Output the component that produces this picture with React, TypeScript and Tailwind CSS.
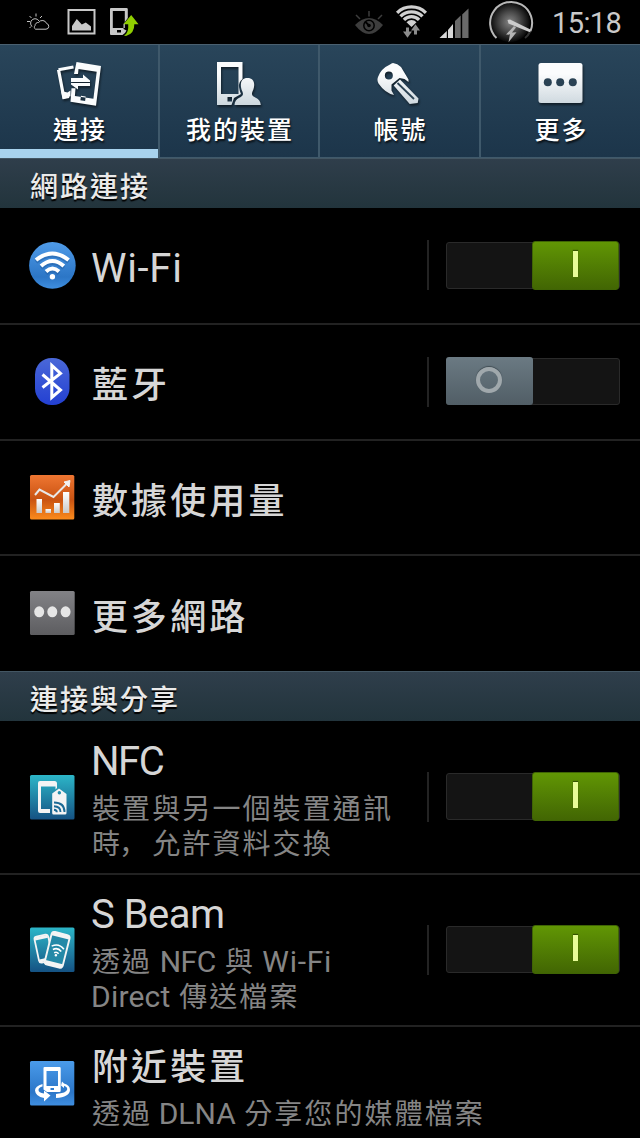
import React from 'react';

type TextSize = 'tab' | 'section' | 'title' | 'summary';

interface MixedTextProps {
  text: string;
  size: TextSize;
}

// Han runs are set a little smaller than the Latin ones and spaced wider
const hanStyles: Record<TextSize, string> = {
  tab: 'text-[25px] tracking-[2px] font-medium',
  section: 'text-[28px] tracking-[2px] font-medium',
  title: 'text-[36px] tracking-[3.1px] font-medium',
  summary: 'text-[28px] tracking-[2.1px] font-normal',
};

const latinTracking = (run: string) => {
  if (run.includes('Wi-Fi')) return 'tracking-[0.7px]';
  if (run === 'NFC') return 'tracking-[-1.5px]';
  if (run.includes('NFC')) return 'tracking-[-0.5px] [word-spacing:1.5px]';
  if (run.includes('Beam')) return 'tracking-[-0.5px]';
  if (run.includes('Direct')) return 'tracking-[0.2px]';
  return 'tracking-normal';
};

const MixedText: React.FC<MixedTextProps> = ({ text, size }) => {
  const runs = text.match(/[\x00-\x7f]+|，|[^\x00-\x7f，]+/g) || [];
  return (
    <>
      {runs.map((run, i) => {
        if (run.charCodeAt(0) < 128) {
          return <span key={i} className={latinTracking(run)}>{run}</span>;
        }
        const family = run === '，'
          ? "-ml-[2px] mr-[2px] font-['Noto_Sans_CJK_SC',sans-serif]"
          : "pl-px -mr-px font-['Noto_Sans_CJK_TC',sans-serif]";
        return (
          <span key={i} className={`inline-block leading-none ${family} ${hanStyles[size]}`}>{run}</span>
        );
      })}
    </>
  );
};

const StatusBar: React.FC = () => (
  <div className="flex h-11 shrink-0 items-start bg-black">
    {/* Notifications */}
    <svg className="ml-[25px]" width="26" height="44" viewBox="25 0 26 44" fill="none" stroke="#c4c4c4" strokeWidth="1">
      <path d="M32 26.5a4.5 4.5 0 1 1 7-5.5M36 13.5v3M29.5 16l2 2M42 16l-2 2M27 21.5h3M29.5 28l1.500-1.500" />
      <path d="M35.500 29.200h10.500a2.900 2.900 0 0 0 .6-5.700a4.500 4.500 0 0 0-8-1a3.200 3.200 0 0 0-3.600 3.200a2.200 2.200 0 0 0 .5 3.500z" />
    </svg>
    <svg className="ml-[16px]" width="30" height="44" viewBox="67 0 30 44">
      <rect x="68.500" y="10" width="26" height="23.500" fill="none" stroke="#c8c8c8" strokeWidth="2" />
      <path d="M72 30.500V26l4.800-7l5 5.500l4-2l5.200 4v4z" fill="#c8c8c8" />
    </svg>
    <svg className="ml-[12px]" width="32" height="44" viewBox="109 0 32 44">
      <path fillRule="evenodd" d="M111 8h15.500q1.300 0 1.300 1.300V18l-4.300 6v5l3 1.500q-1.500 3.500-4 4.500H111q-1 0-1-1V9q0-1 1-1zM112.800 11v17h12V11zM117 30v2.500h4V30z" fill="#c8c8c8" />
      <path d="M124 35.500q5-2.500 4.200-11.300h-4.700l7.700-9.200l7.300 9.200h-4.200q.3 9.300-8.300 11.800z" fill="#8fce00" />
    </svg>

    {/* System indicators */}
    <svg className="ml-[213px]" width="32" height="44" viewBox="354 0 32 44">
      <path d="M355 25q14-14 28 0q-14 18-28 0z" fill="#3d3d3d" />
      <circle cx="369" cy="25.500" r="5.200" fill="none" stroke="#000" strokeWidth="1.500" />
      <circle cx="369" cy="25.500" r="1.800" fill="#000" />
      <path d="M365 21.500l4 4" stroke="#000" strokeWidth="1.800" />
      <path d="M356 15l4 4M369 11v5.500M382 15l-4 4" stroke="#3d3d3d" strokeWidth="1.500" />
    </svg>
    <svg className="ml-[8px]" width="36" height="44" viewBox="394 0 36 44" fill="none">
      <path d="M397.100 12.800a20.500 20.500 0 0 1 28.800 0M400.500 16.400a15.500 15.500 0 0 1 22 0M403.900 19.800a10.700 10.700 0 0 1 15.200 0" stroke="#d0d0d0" strokeWidth="3.300" />
      <path d="M406.500 22.200a7 7 0 0 1 10 0l-5 4.800z" fill="#d0d0d0" />
      <path d="M407.500 27.500v6M415.500 34.500v-7" stroke="#8c8c8c" strokeWidth="3" />
      <path d="M403 31.500h9l-4.500 6.300zM411 30.500h9l-4.500-6.300z" fill="#8c8c8c" />
    </svg>
    <svg className="ml-[8px]" width="34" height="44" viewBox="438 0 34 44">
      <path d="M439.500 38l7.300-7v7zM448 38v-8l5-6v14z" fill="#d8d8d8" />
      <path d="M455 38V21l5.700-5.500v22.500zM462.200 38V14.500l6.300-6v29.500z" fill="#6a6a6a" />
    </svg>
    <svg className="ml-[14px]" width="48" height="44" viewBox="487 0 48 44" fill="none">
      <defs>
        <radialGradient id="gauge">
          <stop offset="0" stopColor="#858585" />
          <stop offset="0.5" stopColor="#4a4a4a" />
          <stop offset="1" stopColor="#080808" />
        </radialGradient>
      </defs>
      <circle cx="511" cy="22" r="20" fill="url(#gauge)" />
      <path d="M497.500 38A21 21 0 1 1 531.500 31" stroke="#b8b8b8" strokeWidth="2" />
      <path d="M526 38q3-2 4.500-5.500" stroke="#333" strokeWidth="2" />
      <path d="M508.500 20l2.500-.5l20.500 10v3l-22-9z" fill="#ccc" />
      <path d="M515 26l-8 8.500l4-.2l-1.500 8l8-10l-4.500.2l4-5z" fill="#b5b5b5" />
    </svg>
    <span className="ml-[18px] mt-[1px] text-[29px] leading-[44px] tracking-[-0.6px] text-[#cacaca]">15:18</span>
  </div>
);

const iconShadow = 'drop-shadow-[1px_2px_1px_rgba(0,0,0,0.5)]';

const TabGradient: React.FC<{ id: string }> = ({ id }) => (
  <defs>
    <linearGradient id={id} x1="0" y1="60" x2="0" y2="106" gradientUnits="userSpaceOnUse">
      <stop offset="0.300" stopColor="#fbfcfd" />
      <stop offset="1" stopColor="#cbd6dd" />
    </linearGradient>
  </defs>
);

const ConnectIcon = () => (
  <svg className={iconShadow} width="48" height="48" viewBox="54 60 48 48">
    <path d="M57.500 69.800L72.500 67M57.500 69.800L62.800 97.500L68 96.500" fill="none" stroke="#fafcfd" strokeWidth="3.200" />
    <path d="M60 91l6.500 1.500l3-2v5.800l-7.500 3z" fill="#fafcfd" />
    <path fillRule="evenodd" d="M75.500 62l24.500 4l-5 39.700l-25.500-4l1-13.500h4l-.6 7.800l18.500 2.800l3.300-27L77.500 69l-.5 5h-4zM80 95.800l-.6 4.400l4.700.7l.6-4.400z" fill="#fafcfd" />
    <path d="M70 78h12v-3.500l7 6v1.500H70zM89 83H70v1.500l7 5V86h12z" fill="#fafcfd" />
  </svg>
);

const MyDeviceIcon = () => (
  <svg className={iconShadow} width="48" height="48" viewBox="215 60 48 48">
    <TabGradient id="device" />
    <path fillRule="evenodd" d="M217 62h25.500v17q-4 3-3.500 8q.5 4 2 7l-7 4l-2.500 7H217zM221 67v27h17.500V67zM227.500 97v4.500h4.500V97z" fill="url(#device)" />
    <path d="M247.500 78c5 0 7.500 3.500 6.500 9c-.7 4-2 4.500-2 7c0 4 8.500 3 8.800 11H234.500c.3-8 8.500-7 8.500-11c0-2.500-1.500-3-2-7c-.8-5.500 1.500-9 6.500-9z" fill="url(#device)" />
  </svg>
);

const AccountIcon = () => (
  <svg className={iconShadow} width="48" height="48" viewBox="376 60 48 48">
    <TabGradient id="account" />
    <path fillRule="evenodd" d="M393 63q4.500.500 8 4l7.500 12.500v2.500l-4-3l-5-1l-8 6.500v6l2.500 4.500q-9-2-15.500-11.500q-1.800-3-.5-6.500q3-8.500 12-12.500q1.500-1.500 3-1.500zM388.800 71.500a4 4 0 1 0 .1 8a4 4 0 0 0-.1-8z" fill="url(#account)" />
    <path d="M400 79.500l18.500 19l-.8 4.500l-8 1l-16-18.500z" fill="url(#account)" />
    <path d="M397.500 83l16.500 16" stroke="#2b4253" strokeWidth="1.800" />
  </svg>
);

const MoreIcon = () => (
  <svg className={iconShadow} width="48" height="48" viewBox="536 60 48 48">
    <TabGradient id="more" />
    <rect x="537.500" y="63" width="44" height="40" rx="2.500" fill="url(#more)" />
    <g fill="#2a4254">
      <circle cx="546.800" cy="82.300" r="4" />
      <circle cx="559.200" cy="82.300" r="4" />
      <circle cx="571.800" cy="82.300" r="4" />
    </g>
  </svg>
);

const tabs = [
  { label: '連接', icon: ConnectIcon, active: true },
  { label: '我的裝置', icon: MyDeviceIcon },
  { label: '帳號', icon: AccountIcon },
  { label: '更多', icon: MoreIcon },
];

const TabBar: React.FC = () => (
  <div className="grid h-[114px] shrink-0 grid-cols-[160px_160px_161px_159px] border-t border-[#4a6070] bg-linear-to-b from-[#29455a] to-[#1c354a]">
    {tabs.map((tab) => (
      <div key={tab.label} className="flex border-r-2 border-[#3f596b] last:border-r-0">
        <button
          className={`flex flex-1 flex-col items-center justify-start pt-[15px] ${
            tab.active ? 'border-b-[9px] border-[#a8d3ee]' : 'border-b border-[#3f596b]'
          }`}
        >
          <tab.icon />
          <span className="mt-[8px] h-[30px] leading-[30px] whitespace-nowrap text-white [text-shadow:1px_2px_2px_rgba(0,0,0,0.7)]">
            <MixedText text={tab.label} size="tab" />
          </span>
        </button>
      </div>
    ))}
  </div>
);

const SectionHeader: React.FC<{ label: string }> = ({ label }) => (
  <div className="flex h-[50px] shrink-0 items-center border-t border-[#435663] bg-linear-to-b from-[#2f3e4b] to-[#22343c] pt-[3px] pl-[29px] text-[#eaeaea] [text-shadow:0_2px_1px_#000]">
    <MixedText text={label} size="section" />
  </div>
);

const Toggle: React.FC<{ on: boolean }> = ({ on }) => (
  <div className="mb-px flex items-center">
    <div className="mr-[17px] h-[50px] w-[2px] bg-[#232323]" />
    <div className={`flex h-[47px] w-[174px] items-center rounded-[3px] border border-[#2a2a2a] bg-[#141414] ${on ? 'justify-end' : 'justify-start'}`}>
      {on ? (
        <div className="flex h-[49px] w-[87px] shrink-0 items-center justify-center rounded-[3px] border border-[#3f6404] bg-linear-to-b from-[#619604] to-[#426603]">
          <div className="mb-[3px] h-[26px] w-[5px] bg-[#e8fc98] shadow-[0_-1px_1px_#355400]" />
        </div>
      ) : (
        <div className="-mt-[2px] -ml-px flex h-[48px] w-[87px] shrink-0 items-center justify-center rounded-[3px] bg-linear-to-b from-[#6b7a83] to-[#515e66]">
          <div className="mr-px mb-[2px] h-[26px] w-[26px] rounded-full border-4 border-[#a0a8ac] shadow-[0_-1px_1px_#414d54]" />
        </div>
      )}
    </div>
  </div>
);

const WifiIcon = () => (
  <svg width="48" height="48" viewBox="28 242 48 48" fill="none">
    <defs>
      <linearGradient id="wifi" x1="0" y1="0" x2="0" y2="1">
        <stop offset="0" stopColor="#4f9be8" />
        <stop offset="0.750" stopColor="#2c76c6" />
        <stop offset="1" stopColor="#3f8fe0" />
      </linearGradient>
    </defs>
    <circle cx="52.400" cy="265.400" r="23.300" fill="url(#wifi)" />
    <g stroke="#1f5c9f" strokeWidth="4" opacity="0.500" transform="translate(0 1.500)">
      <path d="M36 260.500q16.300-13 32.600 0M41 266.500q11.400-10 22.800 0M46 272q6.500-6 13 0" />
    </g>
    <path d="M36 260q16.300-13 32.600 0M41 266q11.400-10 22.800 0M46 271.500q6.500-6 13 0" stroke="#fff" strokeWidth="4" />
    <circle cx="52.400" cy="276.800" r="2.700" fill="#fff" />
  </svg>
);

const BluetoothIcon = () => (
  <svg width="48" height="48" viewBox="28 358 48 48" fill="none">
    <defs>
      <linearGradient id="bt" x1="0" y1="0" x2="0" y2="1">
        <stop offset="0" stopColor="#4a68d8" />
        <stop offset="1" stopColor="#2340d2" />
      </linearGradient>
    </defs>
    <rect x="35" y="358" width="34.500" height="47" rx="16.500" fill="url(#bt)" />
    <path d="M42.500 374.500L60.500 390L51.800 397.500V365.500L60.500 373.500L42.500 387.500" stroke="#fff" strokeWidth="3" />
  </svg>
);

const DataIcon = () => (
  <svg width="48" height="48" viewBox="28 474 48 48" fill="none">
    <defs>
      <linearGradient id="data" x1="0" y1="0" x2="0" y2="1">
        <stop offset="0" stopColor="#ef7632" />
        <stop offset="0.550" stopColor="#c95312" />
        <stop offset="1" stopColor="#fb8b1c" />
      </linearGradient>
      <linearGradient id="bars" x1="0" y1="0" x2="0" y2="1">
        <stop offset="0" stopColor="#fff" />
        <stop offset="1" stopColor="#c9c9c9" />
      </linearGradient>
    </defs>
    <rect x="30" y="475" width="44.300" height="44.500" rx="1.500" fill="url(#data)" />
    <g fill="url(#bars)">
      <rect x="36.500" y="499" width="5.500" height="14" />
      <rect x="45.500" y="509" width="5.500" height="4" />
      <rect x="54" y="503" width="5.800" height="10" />
      <rect x="63" y="492" width="6.300" height="21" />
    </g>
    <path d="M35 495l4.500-5.500l14 7.500l13-13" stroke="#e8e8e8" strokeWidth="2" />
    <path d="M64 482l6-1.500l-1 6.500z" fill="#f2f2f2" stroke="#f2f2f2" />
  </svg>
);

const MoreNetworksIcon = () => (
  <svg width="48" height="48" viewBox="28 590 48 48">
    <defs>
      <linearGradient id="net" x1="0" y1="0" x2="0" y2="1">
        <stop offset="0" stopColor="#828286" />
        <stop offset="1" stopColor="#5d5d60" />
      </linearGradient>
    </defs>
    <rect x="30" y="591" width="44.700" height="44" rx="1.500" fill="url(#net)" />
    <g fill="#e6e6e6">
      <ellipse cx="39.200" cy="611.800" rx="5" ry="5.500" />
      <ellipse cx="52.300" cy="611.800" rx="5" ry="5.500" />
      <ellipse cx="65.600" cy="611.800" rx="5" ry="5.500" />
    </g>
  </svg>
);

const TealTile: React.FC<{ id: string; y: number }> = ({ id, y }) => (
  <>
    <defs>
      <linearGradient id={id} x1="0" y1="0" x2="0" y2="1">
        <stop offset="0" stopColor="#2cb6c8" />
        <stop offset="1" stopColor="#155283" />
      </linearGradient>
    </defs>
    <rect x="30" y={y} width="44.500" height="44.500" rx="1.500" fill={`url(#${id})`} />
  </>
);

const NfcIcon = () => (
  <svg width="48" height="48" viewBox="28 773 48 48" fill="none">
    <TealTile id="nfc" y={775} />
    <path d="M40 781h14.500q2.500 0 2.500 2.500v4.500l-1.500 1.500V786.500H41v22.500h9v4H40q-2 0-2-2v-28q0-2 2-2z" fill="#f4f4f4" />
    <path fillRule="evenodd" d="M59 788.500l7.500 5.500v19q0 1.500-1.500 1.500H53.500q-1.300 0-1.300-1.500v-19.500zM59.300 791a1.700 1.700 0 1 0 .1 3.400a1.700 1.700 0 0 0-.1-3.400z" fill="#f4f4f4" />
    <path d="M54 802.500q10.500 0 10.500 9.500M54 806.200q6.500.3 6.500 5.800M54 809.800q2.800.2 2.800 2.500" stroke="#1c6a95" strokeWidth="1.900" />
  </svg>
);

const BeamIcon = () => (
  <svg width="48" height="48" viewBox="28 926 48 48" fill="none">
    <TealTile id="beam" y={927.5} />
    <g transform="rotate(-12 43 948)">
      <rect x="36.500" y="935.500" width="14" height="26.500" rx="2.500" stroke="#f4f4f4" strokeWidth="1.800" />
      <path d="M37 937.500h13M37 960h13" stroke="#f4f4f4" strokeWidth="3" />
    </g>
    <g transform="rotate(14 57 949.500)">
      <rect x="48" y="933" width="18.500" height="33.500" rx="3" fill="#2489a7" stroke="#f4f4f4" strokeWidth="1.900" />
      <path d="M48.500 935h17.500M48.500 964.500h17.500" stroke="#f4f4f4" strokeWidth="4" />
      <path d="M51 947.500q6.300-5 12.600 0M53 950.500q4.300-3.500 8.600 0M55 953.300q2.300-2 4.600 0" stroke="#fff" strokeWidth="1.600" />
      <circle cx="57.300" cy="955.300" r="1.300" fill="#fff" />
    </g>
  </svg>
);

const NearbyIcon = () => (
  <svg width="48" height="48" viewBox="28 1060 48 48" fill="none">
    <defs>
      <linearGradient id="near" x1="0" y1="0" x2="0" y2="1">
        <stop offset="0" stopColor="#4a9bea" />
        <stop offset="0.700" stopColor="#2b76c8" />
        <stop offset="1" stopColor="#3f8ee0" />
      </linearGradient>
    </defs>
    <rect x="30" y="1061" width="44.300" height="44.500" rx="1.500" fill="url(#near)" />
    <path d="M42.500 1084q-7.500 2-7.500 6.500q.5 6 9 7.500v3.500l6.500-6l-6.500-5v3q-5.500-1-5.500-3.500q0-2.500 4-3.500z" fill="#fff" />
    <path d="M62 1081.500l-1 4l3 2.500v-2.200q3.500 1.200 3.200 3.700q-.7 3.500-11.200 4.500v4q13.500-1 14-8q0-5-6-6.500z" fill="#fff" />
    <path fillRule="evenodd" d="M44.500 1067h15q1.200 0 1.200 1.200v22.500q0 1.300-1.200 1.300H47l-3.500-2.500v-21.500q0-1 1-1zM46.500 1071v15h11.500v-15zM50.500 1088v2h3.500v-2z" fill="#fff" />
  </svg>
);

interface SettingRowProps {
  icon: React.FC;
  title: string;
  summary?: string[];
  toggle?: boolean;
  className: string;
}

const SettingRow: React.FC<SettingRowProps> = ({ icon: Icon, title, summary, toggle, className }) => (
  <div className={`flex shrink-0 items-center border-[#222] pr-5 pl-7 ${className}`}>
    <Icon />
    <div className="ml-[15px] flex-1 whitespace-nowrap">
      <div className={`text-[40px] text-[#d6d6d6] ${summary ? 'leading-[58px]' : 'pt-[6px] leading-[50px]'}`}>
        <MixedText text={title} size="title" />
      </div>
      {summary?.map((line) => (
        <div key={line} className="text-[30px] leading-[35px] text-[#858585]">
          <MixedText text={line} size="summary" />
        </div>
      ))}
    </div>
    {toggle !== undefined && <Toggle on={toggle} />}
  </div>
);

const App: React.FC = () => (
  <div className="flex h-[1138px] w-[640px] flex-col overflow-hidden bg-black font-[Roboto,'Noto_Sans_CJK_TC',sans-serif]">
    <StatusBar />
    <TabBar />

    <SectionHeader label="網路連接" />
    <SettingRow icon={WifiIcon} title="Wi-Fi" toggle={true} className="h-[117px] border-b-2" />
    <SettingRow icon={BluetoothIcon} title="藍牙" toggle={false} className="h-[116px] border-b-2" />
    <SettingRow icon={DataIcon} title="數據使用量" className="h-[115px] border-b-2" />
    <SettingRow icon={MoreNetworksIcon} title="更多網路" className="h-[115px]" />

    <SectionHeader label="連接與分享" />
    <SettingRow
      icon={NfcIcon}
      title="NFC"
      summary={['裝置與另一個裝置通訊', '時，允許資料交換']}
      toggle={true}
      className="h-[154px] border-b-2"
    />
    <SettingRow
      icon={BeamIcon}
      title="S Beam"
      summary={['透過 NFC 與 Wi-Fi', 'Direct 傳送檔案']}
      toggle={true}
      className="h-[152px] border-b-2"
    />
    <SettingRow
      icon={NearbyIcon}
      title="附近裝置"
      summary={['透過 DLNA 分享您的媒體檔案']}
      className="h-[114px]"
    />
  </div>
);

export default App;
